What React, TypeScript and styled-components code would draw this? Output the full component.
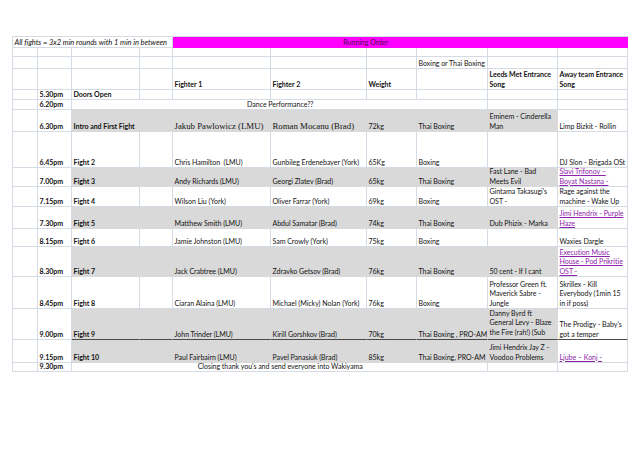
import React from 'react';
import styled, { createGlobalStyle } from 'styled-components';

const GRID = '#d5dbe5';
const GRAY = '#d9d9d9';
const PINK = '#ff00ff';
const INK = '#141414';

const GlobalStyle = createGlobalStyle`
  html, body { margin: 0; padding: 0; background: #ffffff; }
  body { font-family: Lato, "Liberation Sans", Arial, sans-serif; color: ${INK}; }
  #root { width: 638px; height: 452px; overflow: hidden; }
`;

const Page = styled.div`
  box-sizing: border-box;
  width: 638px;
  height: 452px;
  padding: 36px 0 0 12px;
`;

const Sheet = styled.div`
  display: flex;
  flex-direction: column;
  width: max-content;
  border-top: 1px solid ${GRID};
  border-left: 1px solid ${GRID};
`;

const Row = styled.div<{ $h: number }>`
  display: grid;
  grid-template-columns: 25px 34px 68px 33px 98px 96px 50px 71px 70px 70px;
  height: ${p => p.$h}px;
`;

type Fill = 'gray' | 'pink' | undefined;

const edge = (f: Fill) => (f === 'gray' ? GRAY : f === 'pink' ? PINK : GRID);

const Cell = styled.div<{
  $span?: number;
  $fill?: Fill;
  $rule?: boolean;
  $center?: boolean;
  $top?: boolean;
  $bold?: boolean;
  $italic?: boolean;
  $serif?: boolean;
}>`
  grid-column: span ${p => p.$span ?? 1};
  box-sizing: border-box;
  min-width: 0;
  overflow: hidden;
  display: flex;
  flex-direction: column;
  justify-content: ${p => (p.$top ? 'flex-start' : 'flex-end')};
  align-items: ${p => (p.$center ? 'center' : 'flex-start')};
  padding: 0 0 0 1.5px;
  background: ${p => (p.$fill === 'gray' ? GRAY : p.$fill === 'pink' ? PINK : 'transparent')};
  border-right: 1px solid ${p => edge(p.$fill)};
  border-bottom: ${p => (p.$rule ? '1.5px solid #4a4a4a' : `1px solid ${edge(p.$fill)}`)};
  font-family: ${p => (p.$serif ? '"Liberation Serif", "Times New Roman", serif' : 'Lato, "Liberation Sans", sans-serif')};
  font-size: ${p => (p.$serif ? '8.8px' : p.$italic ? '7.5px' : '7.05px')};
  letter-spacing: ${p => (p.$serif ? '0' : '-0.04px')};
  line-height: 9.3px;
  font-weight: ${p => (p.$bold ? 700 : 400)};
  font-style: ${p => (p.$italic ? 'italic' : 'normal')};
  color: ${INK};
  white-space: nowrap;
`;

const Banner = styled.span`
  color: #4a0a45;
`;

const Line = styled.span`
  display: block;
`;

const Link = styled.span`
  display: block;
  color: #8e24aa;
  text-decoration: underline;
`;

type Song = { lines: string[]; link?: boolean; top?: boolean };

const SongText = ({ song }: { song?: Song }) =>
  song ? (
    <>
      {song.lines.map((l, i) =>
        song.link ? <Link key={i}>{l}</Link> : <Line key={i}>{l}</Line>
      )}
    </>
  ) : null;

type Fight = {
  h: number;
  time: string;
  label: string;
  f1: string;
  f2: string;
  kg: string;
  kind: string;
  home?: Song;
  away?: Song;
  gray?: boolean;
  rule?: boolean;
  serif?: boolean;
};

const fights: Fight[] = [
  {
    h: 22, time: '6.30pm', label: 'Intro and First Fight', f1: 'Jakub Pawlowicz (LMU)', f2: 'Roman Mocanu (Brad)',
    kg: '72kg', kind: 'Thai Boxing', home: { lines: ['Eminem - Cinderella', 'Man'] },
    away: { lines: ['Limp Bizkit - Rollin'] }, gray: true, serif: true,
  },
  {
    h: 36, time: '6.45pm', label: 'Fight 2', f1: 'Chris Hamilton\u00a0 (LMU)', f2: 'Gunbileg Erdenebayer (York)',
    kg: '65Kg', kind: 'Boxing', away: { lines: ['DJ Slon - Brigada OSt'] },
  },
  {
    h: 19, time: '7.00pm', label: 'Fight 3', f1: 'Andy Richards (LMU)', f2: 'Georgi Zlatev (Brad)',
    kg: '65kg', kind: 'Thai Boxing', home: { lines: ['Fast Lane - Bad', 'Meets Evil'] },
    away: { lines: ['Slavi Trifonov \u2013', 'Boyat Nastana -'], link: true }, gray: true,
  },
  {
    h: 20, time: '7.15pm', label: 'Fight 4', f1: 'Wilson Liu (York)', f2: 'Oliver Farrar (York)',
    kg: '69kg', kind: 'Boxing', home: { lines: ["Gintama Takasugi's", 'OST -'] },
    away: { lines: ['Rage against the', 'machine - Wake Up'] },
  },
  {
    h: 22, time: '7.30pm', label: 'Fight 5', f1: 'Matthew Smith (LMU)', f2: 'Abdul Samatar (Brad)',
    kg: '74kg', kind: 'Thai Boxing', home: { lines: ['Dub Phizix - Marka'] },
    away: { lines: ['Jimi Hendrix - Purple', 'Haze'], link: true }, gray: true,
  },
  {
    h: 18, time: '8.15pm', label: 'Fight 6', f1: 'Jamie Johnston (LMU)', f2: 'Sam Crowly (York)',
    kg: '75kg', kind: 'Boxing', away: { lines: ['Waxies Dargle'] },
  },
  {
    h: 30, time: '8.30pm', label: 'Fight 7', f1: 'Jack Crabtree (LMU)', f2: 'Zdravko Getsov (Brad)',
    kg: '76kg', kind: 'Thai Boxing', home: { lines: ['50 cent - If I cant'] },
    away: { lines: ['Execution Music', 'House - Pod Prikritie', 'OST -'], link: true }, gray: true,
  },
  {
    h: 32, time: '8.45pm', label: 'Fight 8', f1: 'Ciaran Alaina (LMU)', f2: 'Michael (Micky) Nolan (York)',
    kg: '76kg', kind: 'Boxing', home: { lines: ['Professor Green ft.', 'Maverick Sabre -', 'Jungle'] },
    away: { lines: ['Skrillex - Kill', 'Everybody (1min 15', 'in if poss)'] },
  },
  {
    h: 31, time: '9.00pm', label: 'Fight 9', f1: 'John Trinder (LMU)', f2: 'Kirill Gorshkov (Brad)',
    kg: '70kg', kind: 'Thai Boxing , PRO-AM',
    home: { lines: ['Danny Byrd ft', 'General Levy - Blaze', 'the Fire (rah!) (Sub'], top: true },
    away: { lines: ["The Prodigy - Baby's", 'got a temper'] }, gray: true, rule: true,
  },
  {
    h: 23, time: '9.15pm', label: 'Fight 10', f1: 'Paul Fairbairn (LMU)', f2: 'Pavel Panasiuk (Brad)',
    kg: '85kg', kind: 'Thai Boxing, PRO-AM', home: { lines: ['Jimi Hendrix Jay Z -', 'Voodoo Problems'] },
    away: { lines: ['Ljube \u2013 Konj -'], link: true }, gray: true,
  },
];

const FightRow = ({ f }: { f: Fight }) => {
  const fill: Fill = f.gray ? 'gray' : undefined;
  return (
    <Row $h={f.h}>
      <Cell />
      <Cell $bold>{f.time}</Cell>
      <Cell $bold $fill={fill} $rule={f.rule}>{f.label}</Cell>
      <Cell $fill={fill} $rule={f.rule} />
      <Cell $fill={fill} $rule={f.rule} $serif={f.serif}>{f.f1}</Cell>
      <Cell $fill={fill} $rule={f.rule} $serif={f.serif}>{f.f2}</Cell>
      <Cell $fill={fill} $rule={f.rule}>{f.kg}</Cell>
      <Cell $fill={fill} $rule={f.rule}>{f.kind}</Cell>
      <Cell $fill={fill} $rule={f.rule} $top={f.home?.top}>
        <SongText song={f.home} />
      </Cell>
      <Cell $rule={f.rule}>
        <SongText song={f.away} />
      </Cell>
    </Row>
  );
};

const EmptyCells = ({ n }: { n: number }) => (
  <>
    {Array.from({ length: n }, (_, i) => (
      <Cell key={i} />
    ))}
  </>
);

export default function App() {
  return (
    <>
      <GlobalStyle />
      <Page>
        <Sheet>
          <Row $h={11}>
            <Cell $span={4} $italic>All fights = 3x2 min rounds with 1 min in between</Cell>
            <Cell $span={5} $fill="pink" $center>
              <Banner>Running Order</Banner>
            </Cell>
            <Cell $fill="pink" />
          </Row>
          <Row $h={9}>
            <EmptyCells n={10} />
          </Row>
          <Row $h={12}>
            <EmptyCells n={7} />
            <Cell>Boxing or Thai Boxing</Cell>
            <EmptyCells n={2} />
          </Row>
          <Row $h={21}>
            <EmptyCells n={4} />
            <Cell $bold>Fighter 1</Cell>
            <Cell $bold>Fighter 2</Cell>
            <Cell $bold>Weight</Cell>
            <Cell />
            <Cell $bold>
              <Line>Leeds Met Entrance</Line>
              <Line>Song</Line>
            </Cell>
            <Cell $bold>
              <Line>Away team Entrance</Line>
              <Line>Song</Line>
            </Cell>
          </Row>
          <Row $h={10}>
            <Cell />
            <Cell $bold>5.30pm</Cell>
            <Cell $bold>Doors Open</Cell>
            <EmptyCells n={7} />
          </Row>
          <Row $h={10}>
            <Cell />
            <Cell $bold>6.20pm</Cell>
            <Cell $span={6} $center>Dance Performance??</Cell>
            <EmptyCells n={2} />
          </Row>
          {fights.map(f => (
            <FightRow key={f.time} f={f} />
          ))}
          <Row $h={9}>
            <Cell />
            <Cell $bold>9.30pm</Cell>
            <Cell $span={6} $center>Closing thank you's and send everyone into Wakiyama</Cell>
            <EmptyCells n={2} />
          </Row>
        </Sheet>
      </Page>
    </>
  );
}
